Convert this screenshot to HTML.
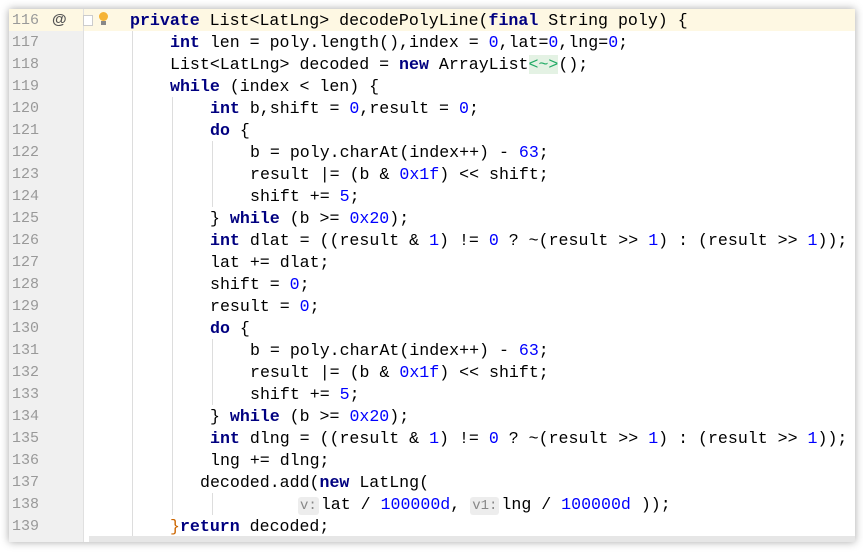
<!DOCTYPE html>
<html><head><style>
body{margin:0;width:863px;height:552px;background:#fff;overflow:hidden;position:relative;font-family:"Liberation Mono","DejaVu Sans Mono",monospace;}
.frame{position:absolute;left:9px;top:9px;width:846px;height:533px;background:#fff;box-shadow:0 0 8px rgba(0,0,0,.35);overflow:hidden}
.gut{position:absolute;left:0;top:0;width:74px;height:533px;background:#f0f0f0;border-right:1px solid #e0e0e0}
.hl{position:absolute;left:0;top:0;width:846px;height:22px;background:#fef8e3}
.ln{position:absolute;left:3px;width:40px;font-size:15px;color:#999;line-height:22px}
.c{position:absolute;left:121px;font-size:16.6px;line-height:22px;white-space:pre;color:#000}
.k{color:#000080;font-weight:bold}
.n{color:#0000ff}
.g{position:absolute;width:1px;background:#ddd}
.h{background:#ededed;color:#888;font-size:14px;border-radius:3px;padding:1px 2px;margin-right:2px}
.sb{position:absolute;left:80px;top:527px;width:766px;height:6px;background:#e6e6e6}
</style></head><body>
<div class="frame">
<div class="hl"></div>
<div class="gut"></div>
<div class="hl" style="width:74px"></div>
<div style="position:absolute;left:43px;top:1px;font:bold 15px 'Liberation Sans',sans-serif;color:#555;line-height:20px">@</div>
<div style="position:absolute;left:74px;top:6px;width:8px;height:9px;border:1px solid #ccc;background:#fff"></div>
<div style="position:absolute;left:90px;top:3px;width:9px;height:9px;border-radius:50%;background:#f5b335"></div>
<div style="position:absolute;left:92px;top:12px;width:5px;height:4px;background:#888"></div>
<div class="g" style="left:123px;top:22px;height:505px"></div>
<div class="g" style="left:163px;top:88px;height:22px"></div>
<div class="g" style="left:163px;top:110px;height:396px"></div>
<div class="g" style="left:203px;top:132px;height:66px"></div>
<div class="g" style="left:203px;top:330px;height:66px"></div>
<div class="g" style="left:203px;top:484px;height:22px"></div>
<div class="sb"></div>
<div id="L"></div>
</div>
<script>
var lines=[
[0,'<span class="k">private</span> List&lt;LatLng&gt; decodePolyLine(<span class="k">final</span> String poly) {'],
[1,'<span class="k">int</span> len = poly.length(),index = <span class="n">0</span>,lat=<span class="n">0</span>,lng=<span class="n">0</span>;'],
[1,'List&lt;LatLng&gt; decoded = <span class="k">new</span> ArrayList<span style="background:#e4f2e4;color:#2a6">&lt;~&gt;</span>();'],
[1,'<span class="k">while</span> (index &lt; len) {'],
[2,'<span class="k">int</span> b,shift = <span class="n">0</span>,result = <span class="n">0</span>;'],
[2,'<span class="k">do</span> {'],
[3,'b = poly.charAt(index++) - <span class="n">63</span>;'],
[3,'result |= (b &amp; <span class="n">0x1f</span>) &lt;&lt; shift;'],
[3,'shift += <span class="n">5</span>;'],
[2,'} <span class="k">while</span> (b &gt;= <span class="n">0x20</span>);'],
[2,'<span class="k">int</span> dlat = ((result &amp; <span class="n">1</span>) != <span class="n">0</span> ? ~(result &gt;&gt; <span class="n">1</span>) : (result &gt;&gt; <span class="n">1</span>));'],
[2,'lat += dlat;'],
[2,'shift = <span class="n">0</span>;'],
[2,'result = <span class="n">0</span>;'],
[2,'<span class="k">do</span> {'],
[3,'b = poly.charAt(index++) - <span class="n">63</span>;'],
[3,'result |= (b &amp; <span class="n">0x1f</span>) &lt;&lt; shift;'],
[3,'shift += <span class="n">5</span>;'],
[2,'} <span class="k">while</span> (b &gt;= <span class="n">0x20</span>);'],
[2,'<span class="k">int</span> dlng = ((result &amp; <span class="n">1</span>) != <span class="n">0</span> ? ~(result &gt;&gt; <span class="n">1</span>) : (result &gt;&gt; <span class="n">1</span>));'],
[2,'lng += dlng;'],
[1.75,'decoded.add(<span class="k">new</span> LatLng('],
[4.2,'<span class="h">v:</span>lat / <span class="n">100000d</span>, <span class="h">v1:</span>lng / <span class="n">100000d</span> ));'],
[1,'<span style="color:#c60">}</span><span class="k">return</span> decoded;']
];
var h='';
for(var i=0;i<lines.length;i++){
 h+='<div class="ln" style="top:'+(i*22+1)+'px">'+(116+i)+'</div>';
 h+='<div class="c" style="top:'+(i*22+1)+'px;left:'+(121+lines[i][0]*40)+'px">'+lines[i][1]+'</div>';
}
document.getElementById('L').innerHTML=h;
</script>
</body></html>
